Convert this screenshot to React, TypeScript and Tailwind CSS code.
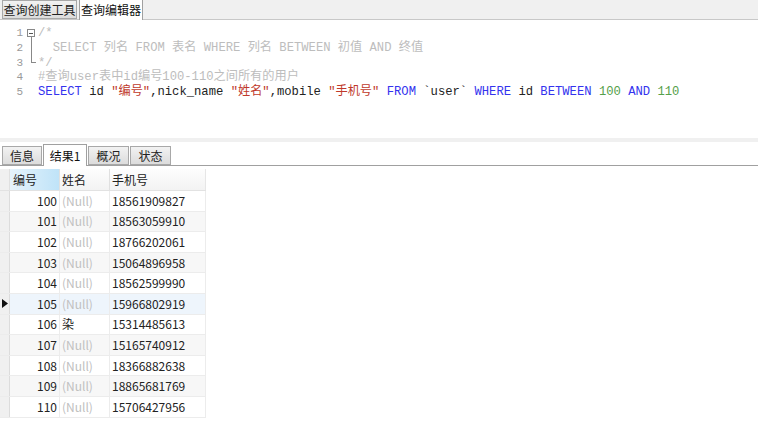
import React from "react";

const rows: { id: number; name: string | null; mobile: string }[] = [
  { id: 100, name: null, mobile: "18561909827" },
  { id: 101, name: null, mobile: "18563059910" },
  { id: 102, name: null, mobile: "18766202061" },
  { id: 103, name: null, mobile: "15064896958" },
  { id: 104, name: null, mobile: "18562599990" },
  { id: 105, name: null, mobile: "15966802919" },
  { id: 106, name: "染", mobile: "15314485613" },
  { id: 107, name: null, mobile: "15165740912" },
  { id: 108, name: null, mobile: "18366882638" },
  { id: 109, name: null, mobile: "18865681769" },
  { id: 110, name: null, mobile: "15706427956" },
];

const mono = { fontFamily: '"Liberation Mono", "Noto Sans CJK SC", monospace' };
const ui = { fontFamily: '"Noto Sans CJK SC", "Noto Sans", sans-serif' };

function Editor() {
  return (
    <div className="relative h-[118px] bg-white text-[12.2px] leading-[14.8px] pt-[6px]" style={mono}>
      <div className="flex">
        <div className="w-[24px] text-right text-[#9a9a9a] text-[11px] pr-[1px]">
          <div>1</div>
          <div>2</div>
          <div>3</div>
          <div>4</div>
          <div>5</div>
        </div>
        <div className="relative w-[14px]">
          <div className="absolute left-[3px] top-[3px] w-[8px] h-[8px] border border-[#888] bg-white flex items-center justify-center">
            <div className="w-[4px] h-px bg-[#555]" />
          </div>
          <div className="absolute left-[7px] top-[11px] w-px h-[26px] bg-[#888]" />
          <div className="absolute left-[7px] top-[36px] w-[5px] h-px bg-[#888]" />
        </div>
        <div className="whitespace-pre">
          <div className="text-[#bdbdbd]">/*</div>
          <div className="text-[#bdbdbd]">  SELECT 列名 FROM 表名 WHERE 列名 BETWEEN 初值 AND 终值</div>
          <div className="text-[#bdbdbd]">*/</div>
          <div className="text-[#bdbdbd]">#查询user表中id编号100-110之间所有的用户</div>
          <div className="text-[#222]">
            <span className="text-[#3333ee]">SELECT</span> id <span className="text-[#c0392b]">"编号"</span>,nick_name{" "}
            <span className="text-[#c0392b]">"姓名"</span>,mobile <span className="text-[#c0392b]">"手机号"</span>{" "}
            <span className="text-[#3333ee]">FROM</span> `user` <span className="text-[#3333ee]">WHERE</span> id{" "}
            <span className="text-[#3333ee]">BETWEEN</span> <span className="text-[#55a04a]">100</span>{" "}
            <span className="text-[#3333ee]">AND</span> <span className="text-[#55a04a]">110</span>
          </div>
        </div>
      </div>
    </div>
  );
}

function Tab({ label, active, w }: { label: string; active?: boolean; w: string }) {
  return (
    <div
      className={
        active
          ? `${w} h-[22px] bg-white border border-b-0 border-[#a0a0a0] flex items-center justify-center text-[12px] text-[#111] -mb-px relative z-10`
          : `${w} h-[19px] bg-gradient-to-b from-[#f2f2f2] to-[#dcdcdc] border border-[#a8a8a8] flex items-center justify-center text-[12px] text-[#222]`
      }
    >
      {label}
    </div>
  );
}

export default function App() {
  return (
    <div className="w-[758px] h-[440px] bg-white overflow-hidden" style={ui}>
      <div className="h-[20px] bg-[#f0f0f0] flex items-end gap-[2px] pl-[2px] border-b border-[#c8c8c8]">
        <Tab label="查询创建工具" w="w-[75px]" />
        <Tab label="查询编辑器" w="w-[64px]" active />
      </div>
      <Editor />
      <div className="h-[4px] bg-[#f0f0f0]" />
      <div className="h-[24px] bg-white flex items-end gap-[1px] pl-[2px] border-b border-[#a0a0a0]">
        <Tab label="信息" w="w-[40px]" />
        <Tab label="结果1" w="w-[44px]" active />
        <Tab label="概况" w="w-[41px]" />
        <Tab label="状态" w="w-[41px]" />
      </div>
      <div className="pt-[3px] text-[12px] text-[#222]">
        <div className="flex h-[22px] border-b border-[#e2e2e2] w-[206px]">
          <div className="w-[10px] bg-[#f0f0f0] border-r border-[#e0e0e0]" />
          <div className="w-[50px] bg-gradient-to-r from-[#e6f3fb] to-[#bfe3f8] border-r border-[#e0e0e0] pl-[3px] flex items-center">编号</div>
          <div className="w-[50px] bg-gradient-to-b from-[#fdfdfd] to-[#f3f3f3] border-r border-[#e0e0e0] pl-[2px] flex items-center">姓名</div>
          <div className="flex-1 bg-gradient-to-b from-[#fdfdfd] to-[#f3f3f3] border-r border-[#e6e6e6] pl-[2px] flex items-center">手机号</div>
        </div>
        {rows.map((r, i) => {
          const sel = r.id === 105;
          const bg = sel ? "bg-[#eef5fc]" : i % 2 === 1 ? "bg-[#f7f7f7]" : "bg-white";
          return (
            <div key={r.id} className={`flex h-[20.6px] w-[206px] ${bg} border-b border-[#ececec]`}>
              <div className="w-[10px] bg-[#f0f0f0] border-r border-[#dcdcdc] flex items-center justify-center">
                {sel && (
                  <svg width="6" height="9" viewBox="0 0 6 9">
                    <path d="M0 0 L6 4.5 L0 9 Z" fill="#111" />
                  </svg>
                )}
              </div>
              <div className="w-[50px] border-r border-[#ececec] text-right pr-[2px] flex items-center justify-end">{r.id}</div>
              <div className="w-[50px] border-r border-[#ececec] pl-[2px] flex items-center">
                {r.name ? <span className="text-[#222]">{r.name}</span> : <span className="text-[#c0c0c0]">(Null)</span>}
              </div>
              <div className="flex-1 border-r border-[#ececec] pl-[2px] flex items-center">{r.mobile}</div>
            </div>
          );
        })}
      </div>
    </div>
  );
}
